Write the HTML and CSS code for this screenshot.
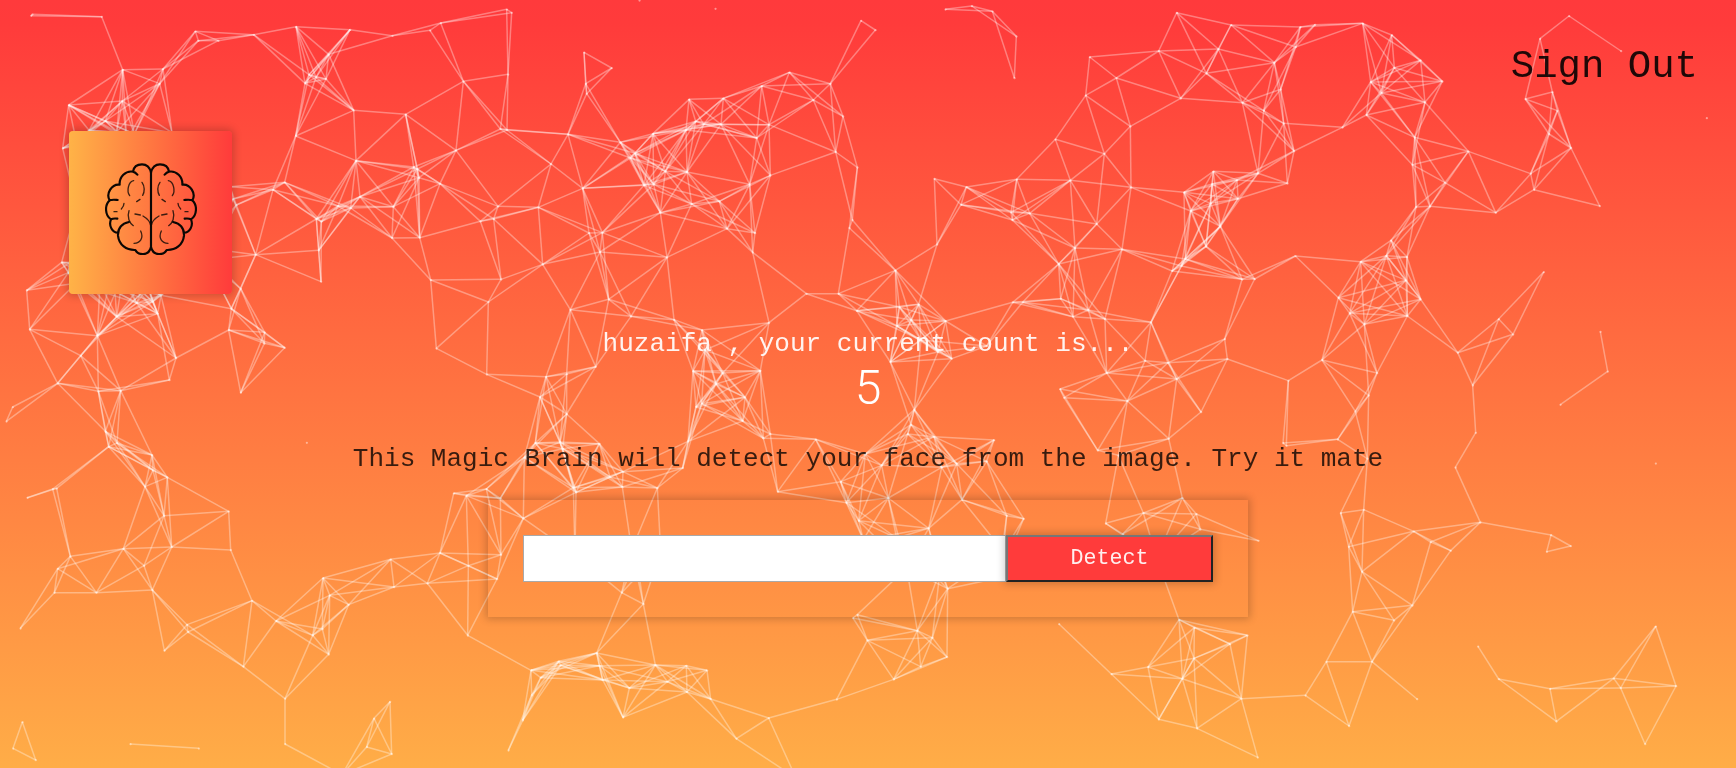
FILE: index.html
```html
<!DOCTYPE html>
<html lang="en">
<head>
<meta charset="utf-8">
<title>Magic Brain</title>
<link rel="stylesheet" href="styles.css">
</head>
<body>
<canvas class="particles" id="particles" width="1736" height="768"></canvas>
<div class="app">
  <nav class="nav"><a class="sign-out">Sign Out</a></nav>
  <div class="logo">
    <svg class="brain" viewBox="0 0 276 276" fill="none" stroke="#0b0704" stroke-linecap="round" stroke-linejoin="round">
      <g id="half">
        <path stroke-width="6.5" d="M138 28C134 12 124 4 111 4C96 4 86 13 84 26C88 27 93 30 97 35M84 26C62 22 42 42 44 65C20 62 2 92 14 112C22 109 28 110 38 111M14 112C-2 126 0 158 18 169C24 166 30 166 37 167M18 169C10 188 22 210 40 209M72 177C50 182 38 196 39 218C42 246 64 262 91 261C99 276 131 282 138 252"/>
        <path stroke-width="4" stroke-opacity=".8" d="M86 53C70 56 64 84 74 98M111 58C120 70 119 87 113 97M105 109L95 116M57 121Q57 130 49 138M27 146H36M72 143C65 163 74 180 85 188M90 153L106 156M114 159C128 167 135 177 137 187M107 204C117 226 105 240 87 241"/>
      </g>
      <use href="#half" transform="translate(276 0) scale(-1 1)"/>
      <path stroke-width="6.5" d="M138 26V252"/>
    </svg>
  </div>
  <div class="rank">huzaifa , your current count is...</div>
  <div class="count">5</div>
  <p class="intro">This Magic Brain will detect your face from the image. Try it mate</p>
  <div class="form">
    <input class="url" type="text">
    <button class="detect">Detect</button>
  </div>
</div>
<script src="particles.js"></script>
</body>
</html>
```
FILE: styles.css
```css
* { box-sizing: border-box; }
body {
  margin: 0;
  height: 768px;
  overflow: hidden;
  font-family: "Courier New", "Liberation Mono", monospace;
  background: linear-gradient(to bottom, #ff3a3c 0, #ff3b3b 3%, #ffad47 100%);
}
.particles { position: absolute; left: 0; top: 0; }
.app {
  position: relative;
  display: flex;
  flex-direction: column;
  align-items: center;
  height: 768px;
}
.nav {
  align-self: stretch;
  display: flex;
  justify-content: flex-end;
  padding: 38px 38px 34px 0;
}
.sign-out { font-size: 39px; line-height: 59px; color: rgba(0, 0, 0, .88); }
.logo {
  align-self: flex-start;
  display: flex;
  align-items: center;
  justify-content: center;
  width: 163px;
  height: 163px;
  margin-left: 69px;
  border-radius: 4px;
  background: linear-gradient(to right, #ffb347, #ff3b3b);
  box-shadow: 0 0 8px 2px rgba(0, 0, 0, .2);
}
.brain { width: 92px; height: 92px; margin-top: -7px; }
.rank { margin-top: 30.5px; font-size: 26.03px; line-height: 39px; color: rgba(255, 255, 255, .92); }
.count {
  margin-bottom: 5px;
  font-family: Roboto, "Liberation Mono", monospace;
  font-weight: 300;
  font-size: 48px;
  line-height: 47px;
  color: #fff;
}
.intro { margin: 24.5px 0 21px; font-size: 26.03px; line-height: 39px; color: rgba(0, 0, 0, .78); }
.form {
  display: flex;
  width: 760px;
  padding: 35px;
  box-shadow: 0 0 8px 2px rgba(0, 0, 0, .2);
}
.url {
  width: 483px;
  height: 47px;
  padding: 8px;
  border: 1px solid #a9a9a9;
  background: #fff;
  font: inherit;
}
.detect {
  width: 207px;
  height: 47px;
  padding: 0;
  border: 2px solid;
  border-color: #767676 #222 #222 #767676;
  background: #ff3b3b;
  color: rgba(255, 255, 255, .92);
  font-family: inherit;
  font-size: 21.67px;
  box-shadow: 0 0 8px 2px rgba(0, 0, 0, .2);
}
```
FILE: particles.js
```js
// Particle groups: origin x, origin y, then x,y pairs in thirds of a pixel.
const groups = [
  [0, 0, [97,43,93,47,305,50,368,209,489,207,479,251,586,94,595,122,655,122,761,104,888,80,1050,89,986,163,927,224,948,232,978,237,915,250,1061,331,1217,343,1177,107,887,408,1068,482,1241,501,1252,507,1257,533,1180,620,1080,590,1052,624,1014,618,949,657,964,665,956,751,963,845,1176,714,1259,713,854,547,819,569,767,764,709,615,699,597,690,560,206,315,367,303,316,363,267,391,188,445,516,398,380,420,403,402,350,396,230,430,230,620,185,787,212,787,205,818,80,871,89,988,292,1007,350,950,410,909,458,905,483,886,473,941,242,1067,528,1074,722,866,694,926,686,990,794,997,793,1030,854,1043,228,850,300,850,340,800,370,820,435,840,445,860,600,742,620,780]],
  [430, 0, [0,91,32,69,230,28,245,38,100,244,234,223,211,387,231,390,78,451,30,551,363,492,414,403,204,619,191,657,151,664,213,838,2,840,175,906,19,1045,325,622,338,793,462,157,545,204,467,251,470,281,571,427,601,474,615,460,458,565,477,699,517,698,510,756,536,898,421,929,603,949,711,772,691,638,642,556,671,553,706,514,771,516,669,401,777,298,880,295,797,364,768,390,821,373,873,373,995,258,1078,217,1201,251,1150,300,1239,349,1217,456,1282,502,1017,374,980,414,1021,526,959,553,868,604,785,612,891,686,975,699,968,757,1267,660,1258,684,1225,881,1129,881,1280,932,1017,968,732,959,816,990,825,1050,789,1113,878,1119,991,1112,497,1100,410,1122,348,1130,170,1123,628,1,856,26]],
  [860, 0, [3,62,46,90,256,28,335,18,397,34,469,109,463,234,689,171,769,234,677,286,896,153,950,38,1113,75,1075,147,1039,220,962,295,811,379,586,418,733,461,470,538,223,536,319,561,303,614,453,637,457,660,509,640,631,541,813,562,710,672,645,744,786,748,596,792,231,733,106,811,972,577,992,633,1060,514,1056,552,1194,520,1131,540,1134,596,1052,610,1081,679,1038,739,976,777,964,798,936,813,1282,550,1302,453,1271,370,1211,332,1147,308,1262,268,1243,188,1307,141,1306,768,1146,838,1184,837,1094,1017,1102,1077,873,967,735,957,685,930,639,950,602,896,488,907,458,907,118,921,176,913,257,963,154,960,111,978,183,1020,234,1056,275,1076,91,1086,380,1038,740,1119,855,1082,924,1088]],
  [1296, 0, [13,81,57,74,200,70,287,105,374,181,439,244,295,203,224,246,256,279,211,345,387,307,139,382,356,412,517,454,349,494,447,548,402,619,360,621,599,638,704,521,714,569,825,444,911,618,759,402,784,332,769,276,688,297,732,116,819,48,975,153,1232,354,285,721,271,767,333,771,194,785,330,841,127,893,161,940,205,973,334,948,374,898,485,1058,608,957,651,1003,743,816,913,995,935,1114,78,1080,243,1119]],
  [0, 378, [173,16,38,87,19,130,295,40,362,38,508,6,722,44,316,160,326,206,351,195,456,231,459,277,502,298,435,326,492,413,158,333,170,331,82,359,211,535,173,572,163,644,289,644,61,751,370,512,432,563,515,507,457,636,686,400,692,516,756,668,561,740,564,762,493,818,730,866,828,729,855,962,855,1098,969,600,989,652,1046,680,938,772,967,753,986,829,1172,544,1182,627,1282,616,920,194,67,1032,39,1111,107,1146,391,1098,596,1111,1170,971,1122,1021,1100,1107,1175,1128,1026,1190]],
  [430, 378, [330,57,410,108,316,195,390,192,398,212,508,197,430,329,438,343,579,281,540,297,577,327,682,330,758,270,774,190,798,87,815,77,858,18,945,58,938,129,1000,181,1021,168,1157,184,1043,341,1232,311,1249,374,1286,428,283,238,71,346,109,353,169,333,211,361,280,421,30,525,115,563,213,530,201,603,113,772,303,877,332,899,305,952,278,1027,235,1117,386,850,392,862,500,825,508,863,518,906,598,930,579,1018,676,861,712,911,769,863,771,942,831,877,842,963,919,1082,1016,1020,1220,964,1282,710,1269,720,575,644,640,678,435,530,605,515,620,540,692,520,1098,1200]],
  [860, 378, [163,95,153,140,143,168,222,176,402,186,16,228,65,262,245,268,290,257,380,250,85,360,306,365,206,451,440,413,491,422,263,632,172,758,217,779,182,866,101,904,261,837,22,787,597,738,600,33,612,59,802,69,950,3,1023,102,926,182,713,217,775,232,967,360,850,405,737,436,1009,408,1021,454,788,468,1195,488,957,725,1003,749,1162,772,1110,798,1002,841,864,867,754,888,967,902,896,1024,1011,1051,1144,962,1193,1138,1285,8,1269,195,1279,203,110,480,10,485,430,520,140,570,240,580,415,600,890,540]],
  [1296, 378, [530,22,539,164,478,268,553,433,765,471,752,521,824,504,793,80,218,52,178,100,125,184,214,242,134,405,203,395,158,506,198,581,353,460,404,492,464,518,349,682,170,701,294,727,228,851,91,851,28,952,159,1044,363,963,546,805,608,903,762,932,781,1030,953,901,974,930,1079,745,1140,924,1047,1098,1079,256]]
];

const LINK_DISTANCE = 72.4;
const points = groups.flatMap(([ox, oy, list]) => {
  const out = [];
  for (let i = 0; i < list.length; i += 2) out.push([ox + list[i] / 3, oy + list[i + 1] / 3]);
  return out;
});

const ctx = document.getElementById('particles').getContext('2d');
ctx.strokeStyle = 'rgba(255, 255, 255, .34)';
ctx.lineWidth = 1.5;
points.forEach((a, i) => {
  for (let j = i + 1; j < points.length; j++) {
    const b = points[j];
    if (Math.hypot(a[0] - b[0], a[1] - b[1]) > LINK_DISTANCE) continue;
    ctx.beginPath();
    ctx.moveTo(a[0], a[1]);
    ctx.lineTo(b[0], b[1]);
    ctx.stroke();
  }
});
ctx.fillStyle = 'rgba(255, 255, 255, .45)';
points.forEach(([x, y]) => {
  ctx.beginPath();
  ctx.arc(x + 0.2, y + 0.2, 1.1, 0, Math.PI * 2);
  ctx.fill();
});
```
